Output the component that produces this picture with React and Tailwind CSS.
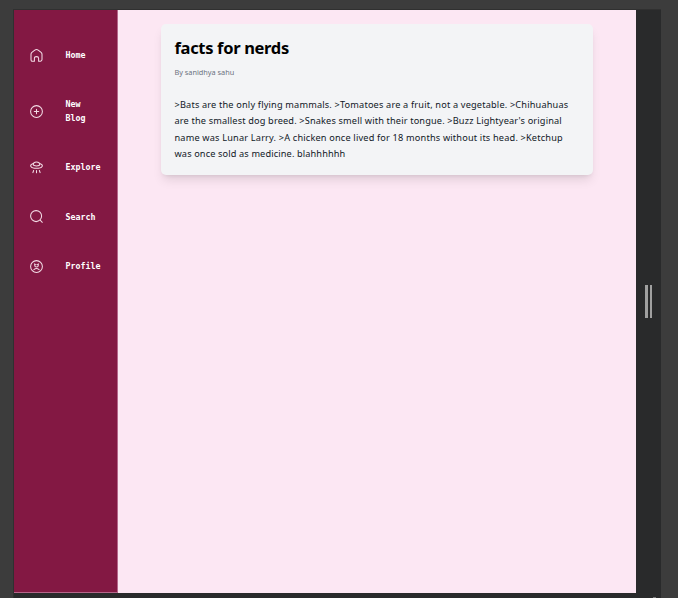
const stroke = {
  width: 13,
  height: 13,
  viewBox: '0 0 13 13',
  fill: 'none',
  stroke: 'currentColor',
  strokeWidth: 1.05,
  strokeLinecap: 'round',
  strokeLinejoin: 'round',
  className: 'shrink-0',
};

const HomeIcon = () => (
  <svg {...stroke}>
    <path d="M1 5.3Q1 4.2 1.9 3.4L4.8 1.1Q6.5 0 8.2 1.1L11.1 3.4Q12 4.2 12 5.3V10.6Q12 12.2 10.5 12.2H8.6V9.2Q8.6 7.6 6.5 7.6T4.4 9.2V12.2H2.5Q1 12.2 1 10.6Z" />
  </svg>
);

const PlusIcon = () => (
  <svg {...stroke}>
    <circle cx="6.5" cy="6.5" r="5.9" />
    <path d="M6.5 4.3v4.4M4.3 6.5h4.4" />
  </svg>
);

const UfoIcon = () => (
  <svg {...stroke}>
    <path d="M3.2 3.6C3.4.2 9.6.2 9.8 3.6C9.8 5.4 3.2 5.4 3.2 3.6Z" />
    <path d="M3.2 2.6C-1.2 3.9.4 7.3 6.5 7.3S14.2 3.9 9.8 2.6" />
    <path d="M3.6 9.5L2.9 11.6M6.5 9.6v2.2M9.4 9.5l.7 2.1" />
  </svg>
);

const SearchIcon = () => (
  <svg {...stroke}>
    <circle cx="6.1" cy="6.1" r="5.5" />
    <path d="M10.4 10.4L12.3 12.3" />
  </svg>
);

const ProfileIcon = () => (
  <svg {...stroke}>
    <circle cx="6.5" cy="6.5" r="5.9" />
    <path d="M4.7 3.7v1.5a1.8 1.8 0 0 0 3.6 0V3.7M5.8 4.6h.1M7.2 4.6h.1" />
    <path d="M3.9 9.6Q6.5 7.4 9.1 9.6" />
  </svg>
);

const items = [
  { label: 'Home', Icon: HomeIcon, box: 'h-[50px]' },
  { label: 'New Blog', Icon: PlusIcon, box: 'h-[62px]' },
  { label: 'Explore', Icon: UfoIcon, box: 'h-[50px]' },
  { label: 'Search', Icon: SearchIcon, box: 'h-[49px]' },
  { label: 'Profile', Icon: ProfileIcon, box: 'h-[50px]' },
];

function Sidebar() {
  return (
    <nav className="flex w-[104px] shrink-0 flex-col border-r border-b border-[#b5668a] bg-[#831843] pt-5 text-[#f3dce6]">
      {items.map(({ label, Icon, box }) => (
        <a key={label} className={`flex shrink-0 items-center pl-4 ${box}`}>
          <Icon />
          <span className="ml-[22.5px] w-9 font-['DejaVu_Sans_Mono',monospace] text-[8.3px] leading-[14px] font-bold text-white">
            {label}
          </span>
        </a>
      ))}
    </nav>
  );
}

const lines = [
  { text: '>Bats are the only flying mammals. >Tomatoes are a fruit, not a vegetable. >Chihuahuas', track: 'tracking-[0.17px]' },
  { text: "are the smallest dog breed. >Snakes smell with their tongue. >Buzz Lightyear's original", track: 'tracking-[0.155px]' },
  { text: 'name was Lunar Larry. >A chicken once lived for 18 months without its head. >Ketchup', track: 'tracking-[0.176px]' },
  { text: 'was once sold as medicine. blahhhhhh', track: 'tracking-[0.13px]' },
];

function BlogCard() {
  return (
    <article className="h-[150.5px] w-[432px] rounded-[5px] bg-[#f3f4f6] pt-3 pl-[13.5px] font-['Noto_Sans',sans-serif] shadow-[0_7px_11px_-2px_rgba(0,0,0,0.1),0_3px_5px_-3px_rgba(0,0,0,0.12)]">
      <h1 className="text-[16.5px] leading-6 font-bold tracking-[-0.32px] whitespace-nowrap text-black">facts for nerds</h1>
      <p className="mt-[5px] text-[7.3px] leading-[14px] whitespace-nowrap text-[#6b7280]">By sanidhya sahu</p>
      <div className="mt-[17.5px] text-[9.2px] leading-[16.5px] text-[#111827]">
        {lines.map(({ text, track }) => (
          <p key={text} className={`whitespace-nowrap ${track}`}>{text}</p>
        ))}
      </div>
    </article>
  );
}

export default function App() {
  return (
    <div className="flex h-[598px] w-[678px] overflow-hidden bg-[#3c3c3c] pt-[9px] pl-[13px]">
      <div className="flex w-[648px] shrink-0 flex-col border-t border-l border-[#303030] bg-[#292a2b]">
        <div className="flex h-[583px] shrink-0">
          <Sidebar />
          <main className="flex w-[518px] shrink-0 items-start bg-[#fce7f3] pt-[14px] pl-[43px]">
            <BlogCard />
          </main>
          <div className="flex w-[25px] items-center justify-center gap-[2px]">
            <span className="h-[33px] w-[3px] bg-[#a0a0a0]" />
            <span className="h-[33px] w-[2px] bg-[#a0a0a0]" />
          </div>
        </div>
        <div className="flex h-[5px] items-end justify-end pr-[5px]">
          <span className="h-px w-[3px] bg-[#777]" />
        </div>
      </div>
    </div>
  );
}
